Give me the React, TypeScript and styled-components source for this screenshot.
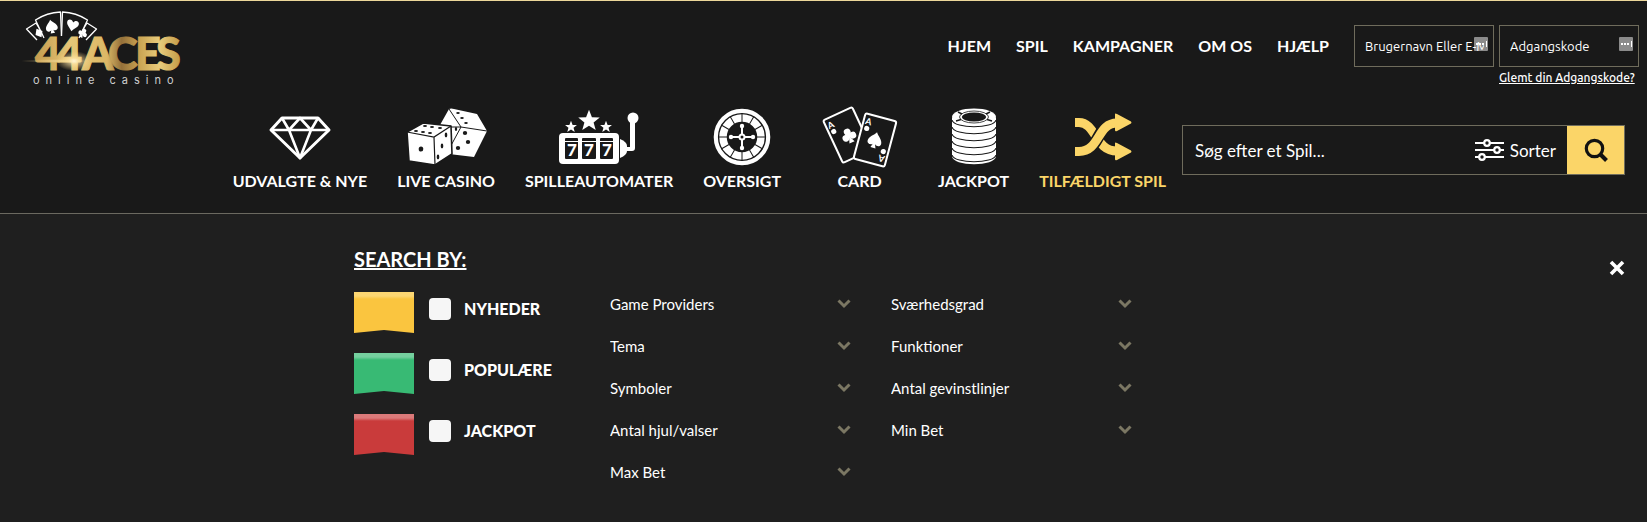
import React from "react";
import styled, { createGlobalStyle } from "styled-components";

const GlobalStyle = createGlobalStyle`
  *, *::before, *::after { box-sizing: border-box; }
  body {
    margin: 0;
    background: #1f1f1f;
    color: #fff;
    font-family: Lato, "Open Sans", sans-serif;
    font-size: 16px;
  }
  a { color: inherit; text-decoration: none; }
  button, input, select { font: inherit; color: inherit; }
`;

const Header = styled.header`
  background: #191919;
  border-top: 1px solid #ecd79a;
  border-bottom: 1px solid #6b6960;
  padding-bottom: 21px;
`;

const TopBar = styled.div`
  display: flex;
  align-items: flex-start;
  padding: 0 8px 0 20px;
  height: 100px;
`;

const LogoLink = styled.a`
  display: block;
  margin: 8px auto 0 0;
  svg { display: block; }
`;

const MainNav = styled.nav`
  display: flex;
  gap: 25px;
  margin: 34px 25px 0 0;
  font-weight: 700;
  line-height: 22px;
`;

const Login = styled.form`
  display: grid;
  grid-template-columns: 140px 140px;
  column-gap: 5px;
  margin-top: 24px;
  font-family: Ubuntu, "Noto Sans", sans-serif;
  font-size: 13px;
`;

const Field = styled.label`
  display: grid;
  height: 42px;
  border: 1px solid #6f6c5c;
  align-items: center;
  > * { grid-area: 1 / 1; }
  > svg { justify-self: end; margin: 0 5px 4px 0; }
`;

const FieldInput = styled.input`
  width: 100%;
  height: 100%;
  min-width: 0;
  padding: 0 9px 0 10px;
  border: 0;
  background: transparent;
  z-index: 1;
  &::placeholder { color: #fff; opacity: 1; }
`;

const ForgotLink = styled.a`
  grid-column: 2;
  margin-top: 1px;
  font-size: 12px;
  font-weight: 500;
  line-height: 20px;
  white-space: nowrap;
  text-decoration: underline;
`;

const GameBar = styled.div`
  display: flex;
  justify-content: flex-end;
  padding-right: 22px;
`;

const Categories = styled.nav`
  display: flex;
  gap: 30px;
`;

const Category = styled.a<{ $active?: boolean; $wide?: boolean }>`
  display: flex;
  flex-direction: column;
  align-items: center;
  min-width: ${(p) => (p.$wide ? "97px" : "0")};
  padding-top: 4px;
  font-weight: 700;
  line-height: 22px;
  white-space: nowrap;
  color: ${(p) => (p.$active ? "#fbd568" : "#fff")};
  svg { display: block; margin-bottom: 1px; }
`;

const Search = styled.form`
  display: flex;
  align-items: center;
  width: 443px;
  height: 50px;
  margin: 24px 0 0 16px;
  border: 1px solid #6f6c5c;
  font-size: 17px;
`;

const SearchInput = styled.input`
  flex: 1;
  min-width: 0;
  height: 100%;
  padding: 0 12px;
  border: 0;
  background: transparent;
  &::placeholder { color: #fff; opacity: 1; }
`;

const SortButton = styled.button`
  display: flex;
  align-items: center;
  gap: 6px;
  padding: 0 11px 0 0;
  border: 0;
  background: transparent;
`;

const SearchButton = styled.button`
  display: grid;
  place-items: center;
  width: 57px;
  height: 100%;
  padding: 0;
  border: 0;
  background: #fbd568;
`;

const Panel = styled.section`
  position: relative;
  display: grid;
  grid-template-columns: 216px 241px 241px;
  column-gap: 40px;
  padding: 33px 0 24px 354px;
`;

const PanelTitle = styled.h2`
  grid-column: 1 / -1;
  margin: 0 0 12px;
  font-size: 20px;
  font-weight: 700;
  line-height: 24px;
  text-decoration: underline;
`;

const CloseButton = styled.button`
  position: absolute;
  top: 42px;
  right: 18px;
  display: grid;
  place-items: center;
  width: 24px;
  height: 24px;
  padding: 0;
  border: 0;
  background: transparent;
`;

const Tags = styled.div`
  display: flex;
  flex-direction: column;
  gap: 20px;
  margin-top: 9px;
`;

const Tag = styled.label`
  display: flex;
  align-items: flex-start;
  height: 41px;
  font-weight: 900;
  line-height: 34px;
`;

const Ribbon = styled.span<{ $color: string; $edge: string }>`
  width: 60px;
  height: 41px;
  background: linear-gradient(${(p) => p.$edge} 0 4px, ${(p) => p.$color} 7px);
  clip-path: polygon(0 0, 100% 0, 100% 100%, 50% 38px, 0 100%);
`;

const Tick = styled.input`
  appearance: none;
  width: 22px;
  height: 22px;
  margin: 6px 13px 0 15px;
  border-radius: 4px;
  background: #f6f6f6;
  &:checked { background: #fbd568; }
`;

const Filters = styled.div`
  display: flex;
  flex-direction: column;
`;

const Filter = styled.div`
  display: grid;
  align-items: center;
  height: 42px;
  > * { grid-area: 1 / 1; }
  > svg { justify-self: end; pointer-events: none; }
`;

const FilterSelect = styled.select`
  appearance: none;
  width: 100%;
  height: 24px;
  padding: 0;
  border: 0;
  border-radius: 0;
  background: transparent;
  font-size: 15px;
  option { color: #000; }
`;

const STAR = "M0-10 2.6-3.4 9.6-3.1 4.1 1.3 6 8.1 0 4.2-6 8.1-4.1 1.3-9.6-3.1-2.6-3.4Z";
const SPADE = "M0-8C2-4.500 7-2 7 2.200 7 5.500 3.200 6.200 1.200 4.200L2.600 8H-2.600L-1.200 4.200C-3.200 6.200-7 5.500-7 2.200-7-2-2-4.500 0-8Z";
const HEART = "M0 7C-2 3.500-7 1-7-3-7-7-1.500-7.500 0-3.500 1.500-7.500 7-7 7-3 7 1 2 3.500 0 7Z";

const Club = ({ transform }: { transform: string }) => (
  <g transform={transform}>
    <circle cy="-4" r="3.600" />
    <circle cx="-4" cy="1.400" r="3.600" />
    <circle cx="4" cy="1.400" r="3.600" />
    <path d="M-2-3H2L1 3 3 8H-3L-1 3Z" />
  </g>
);

function Logo() {
  return (
    <svg width="170" height="80" viewBox="0 0 170 80" role="img" aria-label="44 Aces online casino">
      <defs>
        <linearGradient id="gold" x1="14" y1="0" x2="160" y2="0" gradientUnits="userSpaceOnUse">
          <stop offset="0" stopColor="#c39a4d" />
          <stop offset="0.250" stopColor="#e6c778" />
          <stop offset="0.500" stopColor="#dcb866" />
          <stop offset="0.600" stopColor="#94703a" />
          <stop offset="0.720" stopColor="#c9a352" />
          <stop offset="0.860" stopColor="#e8cc7c" />
          <stop offset="1" stopColor="#c49b48" />
        </linearGradient>
        <radialGradient id="flare">
          <stop offset="0" stopColor="#fffbe8" />
          <stop offset="0.300" stopColor="#ffe7a8" stopOpacity="0.700" />
          <stop offset="1" stopColor="#ffd98a" stopOpacity="0" />
        </radialGradient>
      </defs>
      <g fill="#191919" stroke="#fff" strokeWidth="1.300" strokeLinejoin="round">
        <path d="M17 31 6.500 20 16 14 24 27" />
        <path d="M66 31 76.500 20 67 14 59 27" />
        <path d="M24 29 15.500 11Q27 3.500 40.500 3L41.500 27" />
        <path d="M59 29 67.500 11Q56 3.500 42.500 3L41.500 27" />
      </g>
      <g fill="#fff">
        <path d={SPADE} transform="translate(31.500 17.500) rotate(-12) scale(.85)" />
        <path d={HEART} transform="translate(52.500 16.500) rotate(12) scale(.85)" />
        <path d="M0-5 4 0 0 5-4 0Z" transform="translate(19 24) rotate(-30)" />
        <Club transform="translate(63 24) rotate(28) scale(.6)" />
      </g>
      <text
        x="15 36 62 88 115 136"
        y="61"
        fontFamily="Lato, sans-serif"
        fontWeight="900"
        fontSize="45"
        fill="url(#gold)"
        stroke="url(#gold)"
        strokeWidth="1"
      >
        44ACES
      </text>
      <ellipse cx="54" cy="52" rx="18" ry="10" fill="url(#flare)" />
      <ellipse cx="36" cy="52" rx="36" ry="2" fill="url(#flare)" opacity="0.500" />
      <text x="13" y="75" fill="#cfcfcf" fontFamily="Inter, sans-serif" fontSize="11" letterSpacing="6">
        online casino
      </text>
    </svg>
  );
}

const Diamond = () => (
  <svg width="76" height="64" viewBox="0 0 76 64" fill="none" stroke="#fff" strokeWidth="3" strokeLinejoin="round">
    <path d="M20 13H56L67 25 38 53 9 25Z" />
    <path d="M9 25H67M20 13 27 25 38 53 49 25 56 13M27 25 38 13 49 25" strokeWidth="2.600" />
  </svg>
);

const Dice = () => (
  <svg width="84" height="64" viewBox="0 0 84 64" fill="#fff">
    <path d="M45 4Q47 3 50 4L73 9 83 26 70 52 45 49 36 20Z" />
    <path d="M39 22 57 22 83 26M57 22 45 4" stroke="#191919" fill="none" />
    <path d="M57 22 44 46" stroke="#191919" fill="none" />
    <path d="M3 27 19 18 47 21 48 49 31 60 5 56Z" stroke="#191919" strokeWidth="1.600" strokeLinejoin="round" />
    <path d="M3 27 30 32 47 21M30 32 31 60" stroke="#191919" fill="none" strokeWidth="1.200" />
    <g fill="#191919">
      <ellipse cx="17" cy="44" rx="2.300" ry="2.600" />
      <ellipse cx="42" cy="30" rx="1.300" ry="2.400" /><ellipse cx="38" cy="41" rx="1.300" ry="2.400" /><ellipse cx="34" cy="52" rx="1.300" ry="2.400" />
      <ellipse cx="12" cy="26" rx="2" ry="1" /><ellipse cx="19" cy="27" rx="2" ry="1" /><ellipse cx="26" cy="28" rx="2" ry="1" />
      <ellipse cx="21" cy="21" rx="2" ry="1" /><ellipse cx="28" cy="22" rx="2" ry="1" /><ellipse cx="36" cy="23" rx="2" ry="1" />
      <ellipse cx="61" cy="28" rx="2.200" ry="1.900" /><ellipse cx="64" cy="37" rx="2.200" ry="1.900" /><ellipse cx="54" cy="43" rx="2.200" ry="1.900" />
      <ellipse cx="52" cy="24" rx="1.200" ry="2" />
      <ellipse cx="54" cy="8" rx="1.800" ry="1" /><ellipse cx="58" cy="13" rx="1.800" ry="1" /><ellipse cx="62" cy="18" rx="1.800" ry="1" />
    </g>
  </svg>
);

const Slots = () => (
  <svg width="82" height="64" viewBox="0 0 82 64" fill="#fff">
    <path d={STAR} transform="translate(31 16) scale(1.120)" />
    <path d={STAR} transform="translate(13 22) scale(.62)" />
    <path d={STAR} transform="translate(48 22) scale(.62)" />
    <rect x="1" y="28" width="60" height="31" rx="4" />
    <g fill="#191919">
      <rect x="7" y="33" width="13" height="21" rx="1" />
      <rect x="24" y="33" width="14" height="21" rx="1" />
      <rect x="42" y="33" width="13" height="21" rx="1" />
    </g>
    <path d="M7 36.500H20M24 36.500H38M42 36.500H55" stroke="#fff" strokeWidth="1" />
    <g fontFamily="Lato, sans-serif" fontWeight="900" fontSize="17" textAnchor="middle">
      <text x="14" y="51">7</text>
      <text x="31" y="51">7</text>
      <text x="49" y="51">7</text>
    </g>
    <path d="M62 34Q69 37 69 41V46Q69 50 62 53Z" />
    <path d="M66 42H72V16H77V43Q77 46 74 46H66Z" />
    <circle cx="75" cy="13" r="5.500" />
  </svg>
);

const Roulette = () => (
  <svg width="64" height="64" viewBox="0 0 64 64" fill="none" stroke="#fff">
    <circle cx="32" cy="32" r="26.200" strokeWidth="4.200" />
    <circle cx="32" cy="32" r="19" strokeWidth="7.500" />
    <g stroke="#191919" strokeWidth="1">
      {Array.from({ length: 12 }, (_, i) => (
        <path key={i} d="M32 8V17" transform={`rotate(${i * 30} 32 32)`} />
      ))}
    </g>
    <path d="M32 20V44M20 32H44" strokeWidth="2" />
    <circle cx="32" cy="32" r="2.500" fill="#191919" strokeWidth="2" />
    <g fill="#fff" stroke="none">
      <circle cx="32" cy="21" r="2.200" /><circle cx="32" cy="43" r="2.200" />
      <circle cx="21" cy="32" r="2.200" /><circle cx="43" cy="32" r="2.200" />
    </g>
  </svg>
);

const Cards = () => (
  <svg width="76" height="64" viewBox="0 0 76 64" fill="#fff">
    <g transform="translate(25.500 30) rotate(-25)">
      <rect x="-16" y="-23.500" width="32" height="47" rx="2" fill="#191919" stroke="#fff" strokeWidth="2" />
      <Club transform="translate(1 1) scale(.95)" />
      <text x="-14" y="-13" fontFamily="Lato, sans-serif" fontWeight="700" fontSize="9">A</text>
      <circle cx="-11" cy="-9" r="2.600" />
    </g>
    <g transform="translate(53 35) rotate(15)">
      <rect x="-16" y="-23.500" width="32" height="47" rx="2" fill="#191919" stroke="#fff" strokeWidth="2" />
      <path d={SPADE} />
      <g id="corner">
        <text x="-14" y="-13" fontFamily="Lato, sans-serif" fontWeight="700" fontSize="9">A</text>
        <circle cx="-11" cy="-9" r="2.600" />
      </g>
      <use href="#corner" transform="rotate(180)" />
    </g>
  </svg>
);

const Chips = () => (
  <svg width="50" height="64" viewBox="0 0 50 64">
    <path d="M3 13V51C3 62 47 62 47 51V13Z" fill="#fff" />
    <g fill="none" stroke="#191919" strokeWidth="1.100">
      {[15, 22, 29, 36, 43, 50].map((y) => (
        <path key={y} d={`M3 ${y}C5 ${y + 9} 45 ${y + 9} 47 ${y}`} />
      ))}
    </g>
    <ellipse cx="25" cy="12" rx="22" ry="8.600" fill="#fff" />
    <ellipse cx="25" cy="12" rx="14.500" ry="6" fill="none" stroke="#191919" strokeWidth="0.800" />
    <ellipse cx="25" cy="12" rx="12" ry="4.600" fill="#191919" />
    <path d="M9 7 13 9M41 7 37 9M7 16 12 14.500M43 16 38 14.500" stroke="#191919" strokeWidth="1.400" />
  </svg>
);

const Shuffle = () => (
  <svg width="64" height="64" viewBox="0 0 64 64" fill="none" stroke="#fbd568" strokeWidth="9">
    <path d="M4 17.500H8C25 17.500 24 46 46 46" />
    <path d="M9 46.500C29 46.500 26 18 44 18" stroke="#191919" strokeWidth="12" />
    <path d="M4 46.500H8C29 46.500 26 18 46 18" />
    <g fill="#fbd568" stroke="none">
      <path d="M44 9Q44 8 46 9L60 16.500Q61 18 60 18.500L46 26Q44 27 44 25Z" />
      <path d="M44 38Q44 37 46 38L60 45.500Q61 47 60 47.500L46 55Q44 56 44 54Z" />
    </g>
  </svg>
);

const Sliders = () => (
  <svg width="29" height="24" viewBox="0 0 29 24" fill="#191919" stroke="#fff" strokeWidth="2.200">
    <path d="M0 5H29M0 12H29M0 19H29" />
    <circle cx="12" cy="5" r="2.800" />
    <circle cx="22" cy="12" r="2.800" />
    <circle cx="7" cy="19" r="2.800" />
  </svg>
);

const Magnifier = () => (
  <svg width="24" height="24" viewBox="0 0 24 24" fill="none" stroke="#111" strokeWidth="3.200">
    <circle cx="10.500" cy="10.500" r="8.200" />
    <path d="M16 16 22.500 22.500" strokeWidth="4" />
  </svg>
);

const KeyBadge = () => (
  <svg width="14" height="14" viewBox="0 0 14 14" fill="#fff">
    <rect width="14" height="14" rx="1" fill="#8b8b8b" />
    <path d="M2 6H4V8H2ZM5 6H7V8H5ZM8 6H10V8H8ZM12 4H13V10H12Z" />
  </svg>
);

const Chevron = () => (
  <svg width="14" height="10" viewBox="0 0 14 10" fill="none" stroke="#7b7763" strokeWidth="3">
    <path d="M1.500 1.500 7 7 12.500 1.500" />
  </svg>
);

const Cross = () => (
  <svg width="16" height="16" viewBox="0 0 16 16" stroke="#fff" strokeWidth="3.600">
    <path d="M2 2 14 14M14 2 2 14" />
  </svg>
);

const navItems = ["HJEM", "SPIL", "KAMPAGNER", "OM OS", "HJÆLP"];

const categories = [
  { label: "UDVALGTE & NYE", Icon: Diamond },
  { label: "LIVE CASINO", Icon: Dice },
  { label: "SPILLEAUTOMATER", Icon: Slots },
  { label: "OVERSIGT", Icon: Roulette },
  { label: "CARD", Icon: Cards, wide: true },
  { label: "JACKPOT", Icon: Chips },
  { label: "TILFÆLDIGT SPIL", Icon: Shuffle, active: true },
];

const tags = [
  { label: "NYHEDER", color: "#fac53f", edge: "#fcd672" },
  { label: "POPULÆRE", color: "#38ba74", edge: "#75d09f" },
  { label: "JACKPOT", color: "#c93b3b", edge: "#db7a7a" },
];

const filterColumns = [
  ["Game Providers", "Tema", "Symboler", "Antal hjul/valser", "Max Bet"],
  ["Sværhedsgrad", "Funktioner", "Antal gevinstlinjer", "Min Bet"],
];

export default function App() {
  return (
    <>
      <GlobalStyle />
      <Header>
        <TopBar>
          <LogoLink href="#"><Logo /></LogoLink>
          <MainNav>
            {navItems.map((item) => <a key={item} href="#">{item}</a>)}
          </MainNav>
          <Login>
            <Field>
              <KeyBadge />
              <FieldInput type="text" aria-label="Brugernavn Eller E-Mail" placeholder="Brugernavn Eller E-Mail" />
            </Field>
            <Field>
              <KeyBadge />
              <FieldInput type="password" aria-label="Adgangskode" placeholder="Adgangskode" />
            </Field>
            <ForgotLink href="#">Glemt din Adgangskode?</ForgotLink>
          </Login>
        </TopBar>
        <GameBar>
          <Categories>
            {categories.map(({ label, Icon, wide, active }) => (
              <Category key={label} href="#" $wide={wide} $active={active}>
                <Icon />
                {label}
              </Category>
            ))}
          </Categories>
          <Search>
            <SearchInput type="text" aria-label="Søg efter et Spil" placeholder="Søg efter et Spil..." />
            <SortButton type="button"><Sliders />Sorter</SortButton>
            <SearchButton type="submit" aria-label="Søg"><Magnifier /></SearchButton>
          </Search>
        </GameBar>
      </Header>
      <Panel>
        <PanelTitle>SEARCH BY:</PanelTitle>
        <Tags>
          {tags.map((t) => (
            <Tag key={t.label}>
              <Ribbon $color={t.color} $edge={t.edge} />
              <Tick type="checkbox" />
              {t.label}
            </Tag>
          ))}
        </Tags>
        {filterColumns.map((column) => (
          <Filters key={column[0]}>
            {column.map((name) => (
              <Filter key={name}>
                <FilterSelect aria-label={name}><option>{name}</option></FilterSelect>
                <Chevron />
              </Filter>
            ))}
          </Filters>
        ))}
        <CloseButton type="button" aria-label="Luk"><Cross /></CloseButton>
      </Panel>
    </>
  );
}
